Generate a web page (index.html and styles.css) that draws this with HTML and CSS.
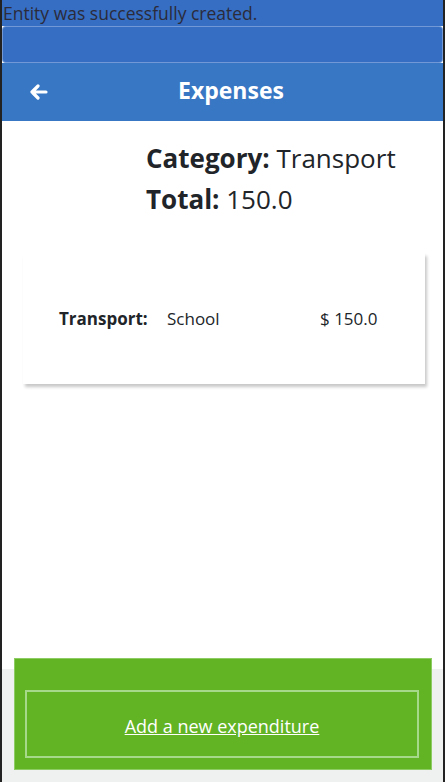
FILE: index.html
```html
<!DOCTYPE html>
<html lang="en">
<head>
<meta charset="utf-8">
<title>Expenses</title>
<link rel="stylesheet" href="styles.css">
</head>
<body>
<div class="page">
  <div class="alert">Entity was successfully created.</div>
  <div class="navbar-box"></div>
  <header class="topbar">
    <a class="back" href="#" aria-label="Back">
      <svg width="18" height="16" viewBox="0 0 18 16"><path d="M8 2 L2 8 L8 14 M2 8 H16" fill="none" stroke="#fff" stroke-width="3.2" stroke-linecap="round" stroke-linejoin="round"/></svg>
    </a>
    <h1 class="title">Expenses</h1>
    <span></span>
  </header>
  <main class="content">
    <section class="summary">
      <p class="summary-line"><strong>Category:</strong> Transport</p>
      <p class="summary-line"><strong>Total:</strong> 150.0</p>
    </section>
    <section class="card">
      <div class="row">
        <span class="cat">Transport:</span>
        <span class="name">School</span>
        <span class="amount">$ 150.0</span>
      </div>
    </section>
  </main>
  <footer class="footer">
    <div class="add-box">
      <a class="add-link" href="#">Add a new expenditure</a>
    </div>
  </footer>
</div>
</body>
</html>
```

FILE: styles.css
```css
* { box-sizing: border-box; }
html, body { margin: 0; padding: 0; }
body {
  font-family: "Open Sans", "Noto Sans", sans-serif;
  background: #fff;
  color: #212529;
}
.page {
  height: 782px;
  border-left: 2px solid #222;
  border-right: 2px solid #222;
  display: flex;
  flex-direction: column;
  overflow: hidden;
}
.alert {
  height: 26px;
  background: #366ec3;
  color: #2b2b3a;
  font-size: 17.5px;
  line-height: 26px;
  padding-left: 1px;
  white-space: nowrap;
}
.navbar-box {
  height: 37px;
  background: #366ec3;
  border: 1px solid rgba(255,255,255,0.3);
  border-radius: 4px;
}
.topbar {
  height: 58px;
  background: #3777c3;
  display: grid;
  grid-template-columns: 60px 1fr 60px;
  align-items: center;
}
.back {
  display: flex;
  justify-content: flex-start;
  padding-left: 28px;
}
.back svg { display: block; }
.title {
  margin: 0 0 4px;
  text-align: center;
  color: #fff;
  font-size: 23px;
  font-weight: 700;
  padding-left: 17px;
}
.content {
  flex: 1;
  display: flex;
  flex-direction: column;
}
.summary {
  padding: 17px 0 0 144px;
}
.summary-line {
  margin: 0;
  font-size: 26px;
  line-height: 41px;
  color: #212529;
}
.card {
  margin: 33px 18px 0 21px;
  height: 131px;
  background: #fff;
  box-shadow: 2px 3px 3px rgba(0,0,0,0.22);
  display: flex;
  align-items: center;
}
.row {
  display: flex;
  align-items: baseline;
  font-size: 17px;
  padding-left: 36px;
  width: 100%;
}
.cat { font-weight: 700; width: 108px; }
.name { width: 153px; }
.footer {
  height: 124px;
  padding: 0 11px 12px 12px;
  background: linear-gradient(to bottom, #fff 11px, #eff1f0 11px);
}
.add-box {
  height: 112px;
  background: #62b425;
  border: 1px solid #8ccc62;
  padding: 31px 12px 11px 10px;
}
.add-link {
  display: flex;
  align-items: center;
  justify-content: center;
  height: 68px;
  padding-top: 4px;
  border: 2px solid #a6d98a;
  color: #fff;
  font-size: 18px;
  text-decoration: underline;
}
```
